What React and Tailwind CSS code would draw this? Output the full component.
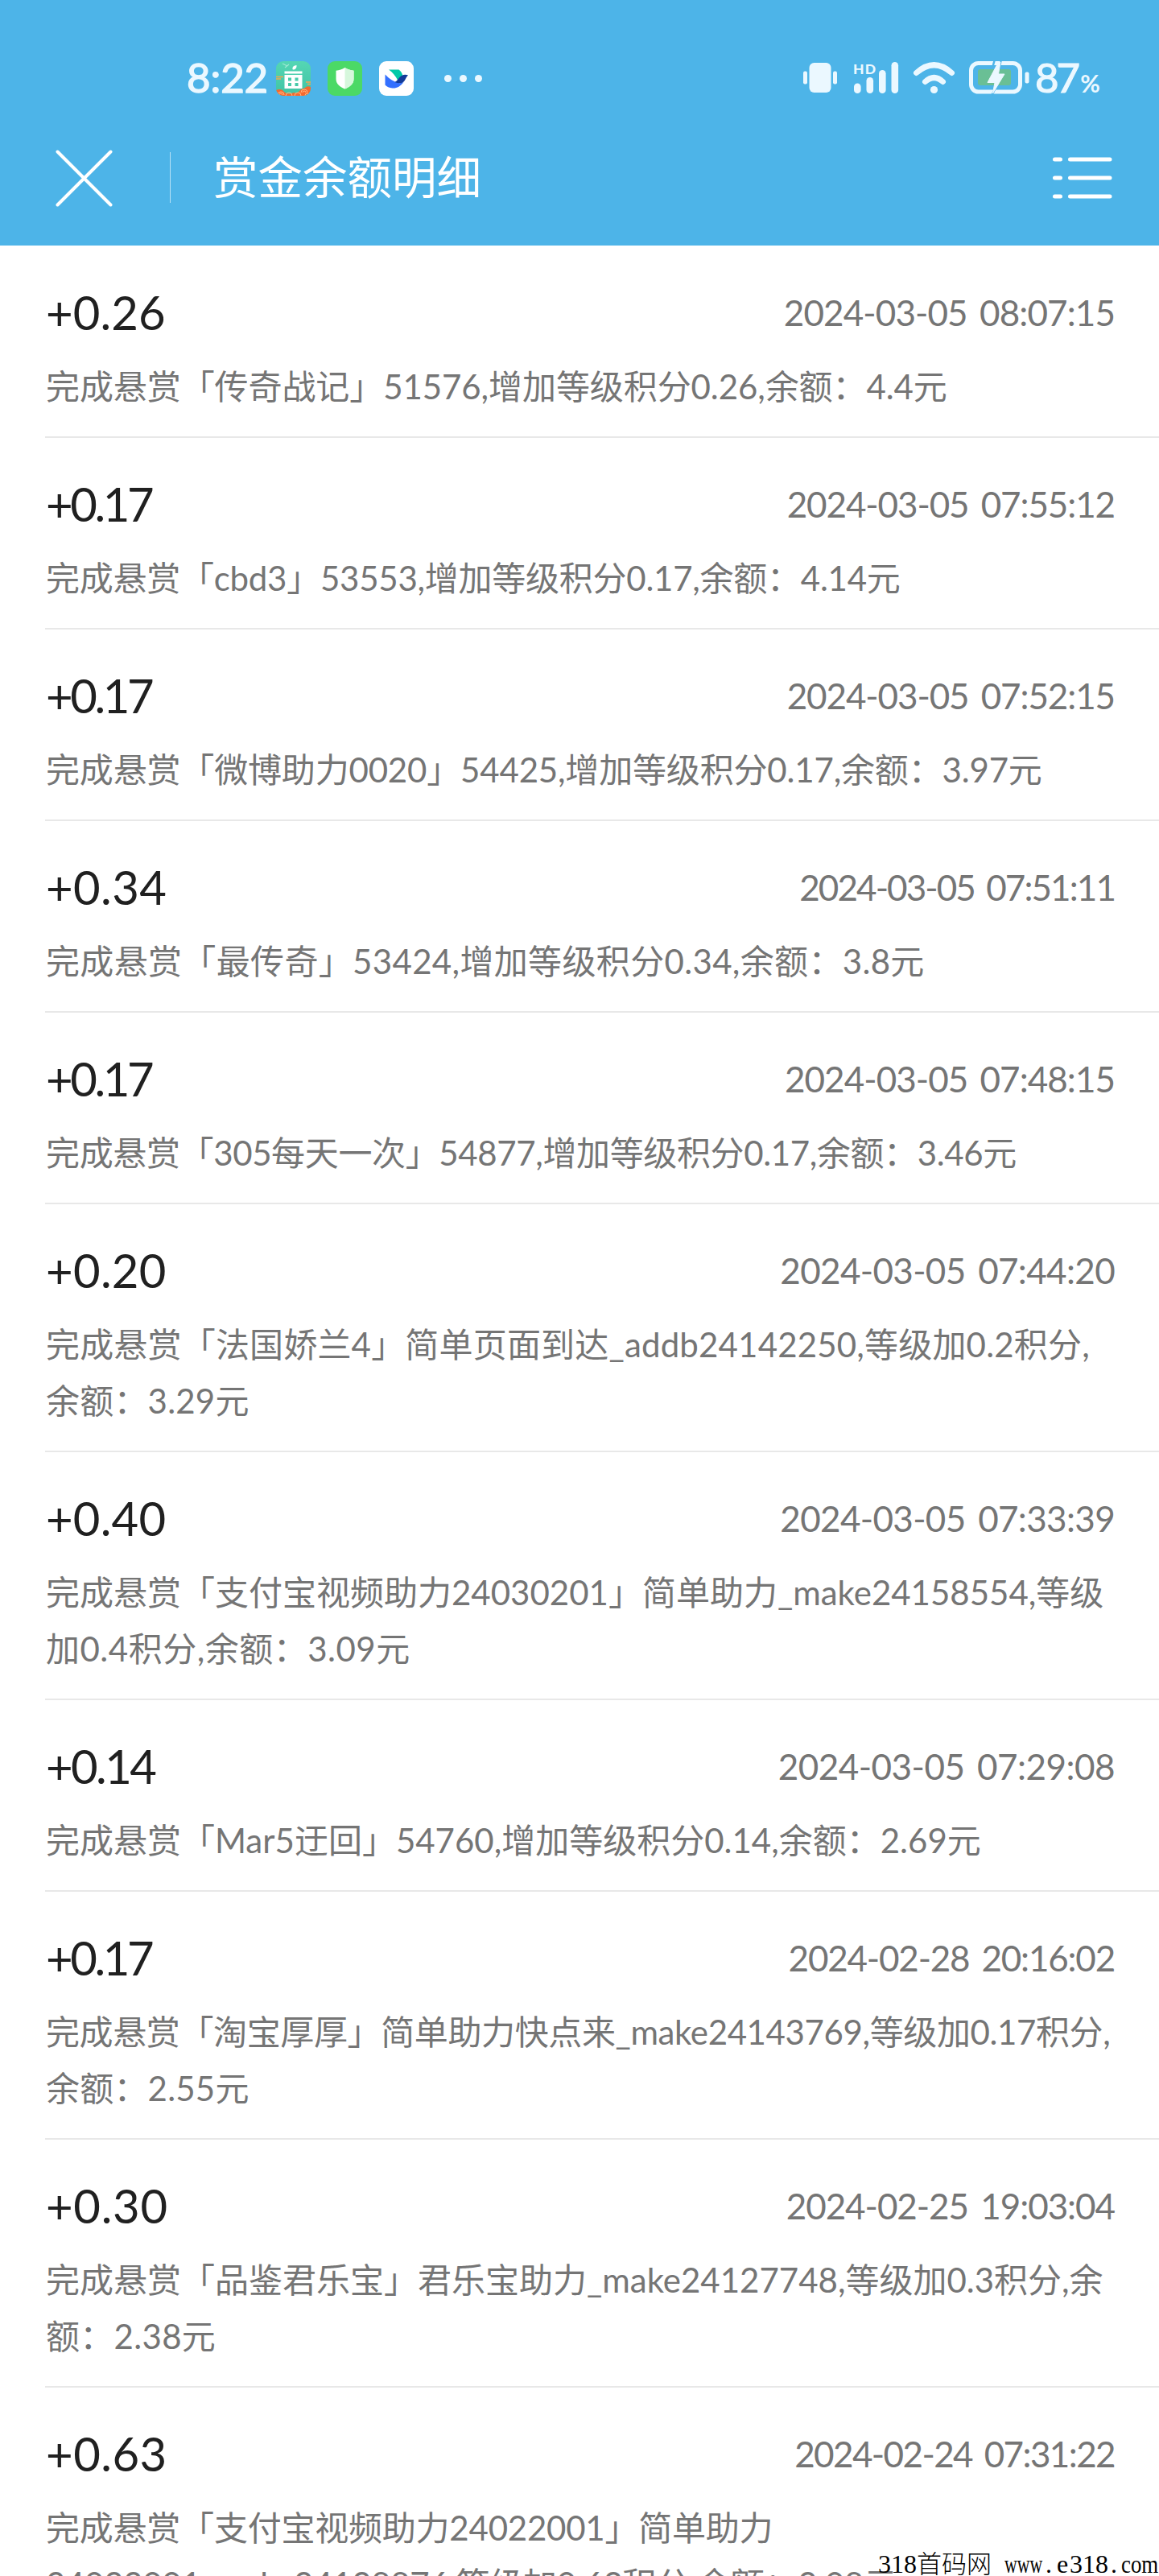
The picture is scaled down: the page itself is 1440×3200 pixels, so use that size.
import clsx from 'clsx'

const records = [
  {
    amount: '+0.26', amountCls: 'tracking-[0.1px]',
    time: '2024-03-05 08:07:15', timeCls: 'tracking-[-0.9px]',
    lines: [{ text: '完成悬赏「传奇战记」51576,增加等级积分0.26,余额：4.4元', cls: 'tracking-[-0.08px]' }],
  },
  {
    amount: '+0.17', amountCls: 'tracking-[-3.4px]',
    time: '2024-03-05 07:55:12', timeCls: 'tracking-[-1.1px]',
    lines: [{ text: '完成悬赏「cbd3」53553,增加等级积分0.17,余额：4.14元', cls: 'tracking-[-0.25px]' }],
  },
  {
    amount: '+0.17', amountCls: 'tracking-[-3.4px]',
    time: '2024-03-05 07:52:15', timeCls: 'tracking-[-1.1px]',
    lines: [{ text: '完成悬赏「微博助力0020」54425,增加等级积分0.17,余额：3.97元', cls: 'tracking-[-0.17px]' }],
  },
  {
    amount: '+0.34', amountCls: 'tracking-[0.4px]',
    time: '2024-03-05 07:51:11', timeCls: 'tracking-[-1.92px]',
    lines: [{ text: '完成悬赏「最传奇」53424,增加等级积分0.34,余额：3.8元', cls: 'tracking-[0.34px]' }],
  },
  {
    amount: '+0.17', amountCls: 'tracking-[-3.4px]',
    time: '2024-03-05 07:48:15', timeCls: 'tracking-[-0.96px]',
    lines: [{ text: '完成悬赏「305每天一次」54877,增加等级积分0.17,余额：3.46元', cls: 'tracking-[-0.37px]' }],
  },
  {
    amount: '+0.20', amountCls: 'tracking-[0.3px]',
    time: '2024-03-05 07:44:20', timeCls: 'tracking-[-0.66px]',
    lines: [
      { text: '完成悬赏「法国娇兰4」简单页面到达_addb24142250,等级加0.2积分,', cls: 'tracking-[0.18px]' },
      { text: '余额：3.29元', cls: 'tracking-[0.2px]' },
    ],
  },
  {
    amount: '+0.40', amountCls: 'tracking-[0.2px]',
    time: '2024-03-05 07:33:39', timeCls: 'tracking-[-0.66px]',
    lines: [
      { text: '完成悬赏「支付宝视频助力24030201」简单助力_make24158554,等级' },
      { text: '加0.4积分,余额：3.09元', cls: 'tracking-[0.5px]' },
    ],
  },
  {
    amount: '+0.14', amountCls: 'tracking-[-2.6px]',
    time: '2024-03-05 07:29:08', timeCls: 'tracking-[-0.53px]',
    lines: [{ text: '完成悬赏「Mar5迂回」54760,增加等级积分0.14,余额：2.69元' }],
  },
  {
    amount: '+0.17', amountCls: 'tracking-[-3.4px]',
    time: '2024-02-28 20:16:02', timeCls: 'tracking-[-1.2px]',
    lines: [
      { text: '完成悬赏「淘宝厚厚」简单助力快点来_make24143769,等级加0.17积分,', cls: 'tracking-[-0.38px]' },
      { text: '余额：2.55元', cls: 'tracking-[0.2px]' },
    ],
  },
  {
    amount: '+0.30', amountCls: 'tracking-[0.7px]',
    time: '2024-02-25 19:03:04', timeCls: 'tracking-[-1.05px]',
    lines: [
      { text: '完成悬赏「品鉴君乐宝」君乐宝助力_make24127748,等级加0.3积分,余' },
      { text: '额：2.38元', cls: 'tracking-[0.3px]' },
    ],
  },
  {
    amount: '+0.63', amountCls: 'tracking-[0.5px]',
    time: '2024-02-24 07:31:22', timeCls: 'tracking-[-1.6px]',
    lines: [
      { text: '完成悬赏「支付宝视频助力24022001」简单助力', cls: 'tracking-[-0.22px]' },
      { text: '24022001_make24128876,等级加0.63积分,余额：2.08元', cls: 'tracking-[-0.3px]' },
    ],
  },
]

function HouseAppIcon() {
  return (
    <svg className="w-[43px] h-[43px]" viewBox="0 0 43 43">
      <defs>
        <clipPath id="house-clip"><rect width="43" height="43" rx="9" /></clipPath>
        <linearGradient id="house-bg" x1="0" y1="0" x2="0" y2="1">
          <stop offset="0" stopColor="#55d6b4" />
          <stop offset="1" stopColor="#3fc3a4" />
        </linearGradient>
      </defs>
      <g clipPath="url(#house-clip)">
        <rect width="43" height="43" fill="url(#house-bg)" />
        <path d="M8 3l6 3M11 8l5-4" stroke="#9fe8d4" strokeWidth="1.2" />
        <path d="M0 19.5h9M0 22h6M37 26h6M39 28.5h4" stroke="#f6a453" strokeWidth="1.6" />
        <path d="M0 36c4-2 8-1 10 2 3 3 8 3 12 1 3 1 6 0 8-3 3-3 5-1 7-4 2-1 4-1 6 0v11H0z" fill="#f4692f" />
        <g fill="none" stroke="#ffc08a" strokeWidth="0.9">
          <path d="M2 42a4 4 0 0 1 8 0M12 43a4 4 0 0 1 8 0M23 43a4 4 0 0 1 8 0M31 39a4 4 0 0 1 8 0M36 43a3 3 0 0 1 6 0M4 42a2 2 0 0 1 4 0M33 39a2 2 0 0 1 4 0" />
        </g>
        <path d="M20.5 10c-.5-3 1.500-4.500 5-5 .3 3.500-1.500 5.500-4.500 5.500z" fill="#fff" />
        <path d="M10.500 12.500h22v3h-22z" fill="#fff" />
        <path fillRule="evenodd" d="M10.500 17h22v17h-22zM15 20.500v4h4v-4zM23.500 20.500v4h4v-4zM15 27v4h4v-4zM23.500 27v4h4v-4z" fill="#fff" />
      </g>
    </svg>
  )
}

function ShieldAppIcon() {
  return (
    <svg className="w-[43px] h-[43px]" viewBox="0 0 43 43">
      <rect width="43" height="43" rx="9" fill="#4bd966" />
      <path d="M21.500 8c3.500 2.200 7 3.400 11 3.800V22c0 6-4.500 10-11 12.500C15 32 10.500 28 10.500 22V11.800c4-.4 7.500-1.600 11-3.800z" fill="#fff" />
      <path d="M21.500 8c3.500 2.200 7 3.400 11 3.800V22c0 6-4.500 10-11 12.500z" fill="#d6f7dc" />
    </svg>
  )
}

function BirdAppIcon() {
  return (
    <svg className="w-[43px] h-[43px]" viewBox="0 0 43 43">
      <rect width="43" height="43" rx="9" fill="#fff" />
      <path d="M12 10.500h12.500c3 2 4.500 5 4.800 8l-6 5.500C20.500 18.500 17 14 12 10.500z" fill="#00c9a7" />
      <path d="M7.500 16.500c5 5.500 10.500 9 17 10.500 2 .5 4 0 6-1-4 5.500-9 8-14 7.500-4-.4-7-1.800-9-4z" fill="#3370ff" />
      <path d="M19.500 26c2.500-1.200 4-3.500 6-6 2.500-3 6-4.200 10.500-2.700-2 2-3 5-4.500 7.200-2.500 3.500-7.500 3.500-12 1.500z" fill="#133c9a" />
    </svg>
  )
}

function SystemIcons() {
  return (
    <svg className="w-[282px] h-[44px] shrink-0" viewBox="998 75 282 44" fill="#ebf8ff">
      {/* vibrate */}
      <rect x="1005.500" y="78" width="27" height="37" rx="6" />
      <rect x="998" y="88.500" width="5" height="16" rx="2" />
      <rect x="1035" y="88.500" width="5" height="16" rx="2" />
      {/* signal */}
      <text x="1060" y="92" fontSize="17.500" fontWeight="900" fontFamily="Lato" textLength="28">HD</text>
      <rect x="1061" y="103.500" width="8.600" height="12.500" rx="4.300" />
      <rect x="1076.500" y="96" width="8.600" height="20" rx="4.300" />
      <rect x="1092" y="87" width="8.600" height="29" rx="4.300" />
      <rect x="1107.500" y="77" width="8.600" height="39" rx="4.300" />
      {/* wifi */}
      <g fill="none" stroke="#ebf8ff" strokeWidth="7" strokeLinecap="round">
        <path d="M1138.500 90.500Q1160.500 71 1182.500 90.500" />
        <path d="M1149.500 101.500Q1160.500 91.500 1171.500 101.500" />
      </g>
      <circle cx="1160.500" cy="111.500" r="4.600" />
      {/* battery */}
      <rect x="1215" y="86" width="41" height="20" rx="3" fill="#6abf95" />
      <rect x="1206.500" y="78.500" width="61" height="35.500" rx="9" fill="none" stroke="#ebf8ff" strokeWidth="5" />
      <rect x="1273.500" y="89.500" width="5" height="14" rx="2" />
      <path d="M1235.500 75.500l-2 7M1236 111l-3.500 7M1243.500 75.500l-1.500 7" stroke="#4db4e8" strokeWidth="2.500" />
      <path d="M1240.500 77l-13.500 25.500h9l-2.500 13.500 14.500-24h-7.500l2.500-15z" stroke="#ebf8ff" strokeWidth="1" strokeLinejoin="round" />
    </svg>
  )
}

function StatusBar() {
  return (
    <div className="h-[140px] pt-[54px] pl-[232px] pr-[72px] flex items-start text-[#ebf8ff]">
      <div className="h-[86px] flex-1 flex items-center">
        <span className="w-[111px] pb-[3px] text-[51px] leading-none tracking-[-0.1px] [-webkit-text-stroke:1.4px_#ebf8ff]">8:22</span>
        <div className="flex gap-[21px]">
          <HouseAppIcon />
          <ShieldAppIcon />
          <BirdAppIcon />
        </div>
        <div className="ml-[38px] flex gap-[10px]">
          <i className="size-[9px] rounded-full bg-[#ebf8ff]" />
          <i className="size-[9px] rounded-full bg-[#ebf8ff]" />
          <i className="size-[9px] rounded-full bg-[#ebf8ff]" />
        </div>
      </div>
      <div className="h-[86px] flex items-center">
        <SystemIcons />
        <div className="ml-[6px] w-[82px] pb-[3px] flex items-baseline leading-none whitespace-nowrap">
          <span className="text-[51px] tracking-[-3px] [-webkit-text-stroke:1.2px_#ebf8ff]">87</span>
          <span className="ml-[3px] text-[30px] font-bold">%</span>
        </div>
      </div>
    </div>
  )
}

function TitleBar() {
  return (
    <div className="h-[165px] pl-[69px] pr-[58px] pb-[4px] flex items-center">
      <svg className="w-[72px] h-[72px]" viewBox="0 0 72 72" fill="none" stroke="#fff" strokeWidth="4" strokeLinecap="round">
        <path d="M2.500 3.500l66 66M68.500 3.500l-66 66" />
      </svg>
      <div className="ml-[70px] w-px h-[63px] bg-white/60" />
      <h1 className="ml-[53px] flex-1 text-[55.500px] leading-none pb-px">赏金余额明细</h1>
      <svg className="w-[75px] h-[54px]" viewBox="0 0 75 54" stroke="#fff" strokeWidth="5" strokeLinecap="round">
        <path d="M3.500 4h7M22.500 4h49.500M3.500 27h7M22.500 27h49.500M3.500 50h7M22.500 50h49.500" />
      </svg>
    </div>
  )
}

function Record({ amount, amountCls, time, timeCls, lines }) {
  return (
    <li className="ml-[56px] border-b-2 border-[#e8e8e8] pl-px pt-[42px] pb-[27px]">
      <div className="h-[80px] pr-[55px] flex items-center justify-between leading-none">
        <span className={clsx('text-[58px] text-[#202020]', amountCls)}>{amount}</span>
        <span className={clsx('text-[44px] text-[#757575] [word-spacing:5px]', timeCls)}>{time}</span>
      </div>
      <p className="mt-[17px] text-[42px] leading-[70px] text-[#757575] whitespace-nowrap">
        {lines.map((line) => (
          <span key={line.text} className={clsx('block h-[70px]', line.cls)}>{line.text}</span>
        ))}
      </p>
    </li>
  )
}

function Watermark() {
  return (
    <div className="absolute right-0 bottom-[-3px] w-[349px] h-[36px] flex items-center text-[32px] leading-none text-black whitespace-nowrap font-['Liberation_Serif','Noto_Sans_CJK_SC',serif]">
      <span className="w-[48px]">318</span>
      <span className="w-[109px] text-[31px] font-light">首码网</span>
      <span className="w-[48px]"><span className="inline-block origin-left scale-x-[0.68]">www</span></span>
      <span className="w-[17px] pl-[3px]">.</span>
      <span className="w-[16px]">e</span>
      <span className="w-[48px]">318</span>
      <span className="w-[16px] pl-[3px]">.</span>
      <span className="w-[47px]"><span className="inline-block origin-left scale-x-[0.84]">com</span></span>
    </div>
  )
}

export default function App() {
  return (
    <div className="relative w-[1440px] h-[3200px] overflow-hidden bg-white font-['Lato','Noto_Sans_CJK_SC',sans-serif]">
      <header className="h-[305px] bg-[#4db4e8] text-white">
        <StatusBar />
        <TitleBar />
      </header>
      <ul className="mt-px">
        {records.map((r) => (
          <Record key={r.time} {...r} />
        ))}
      </ul>
      <Watermark />
    </div>
  )
}
